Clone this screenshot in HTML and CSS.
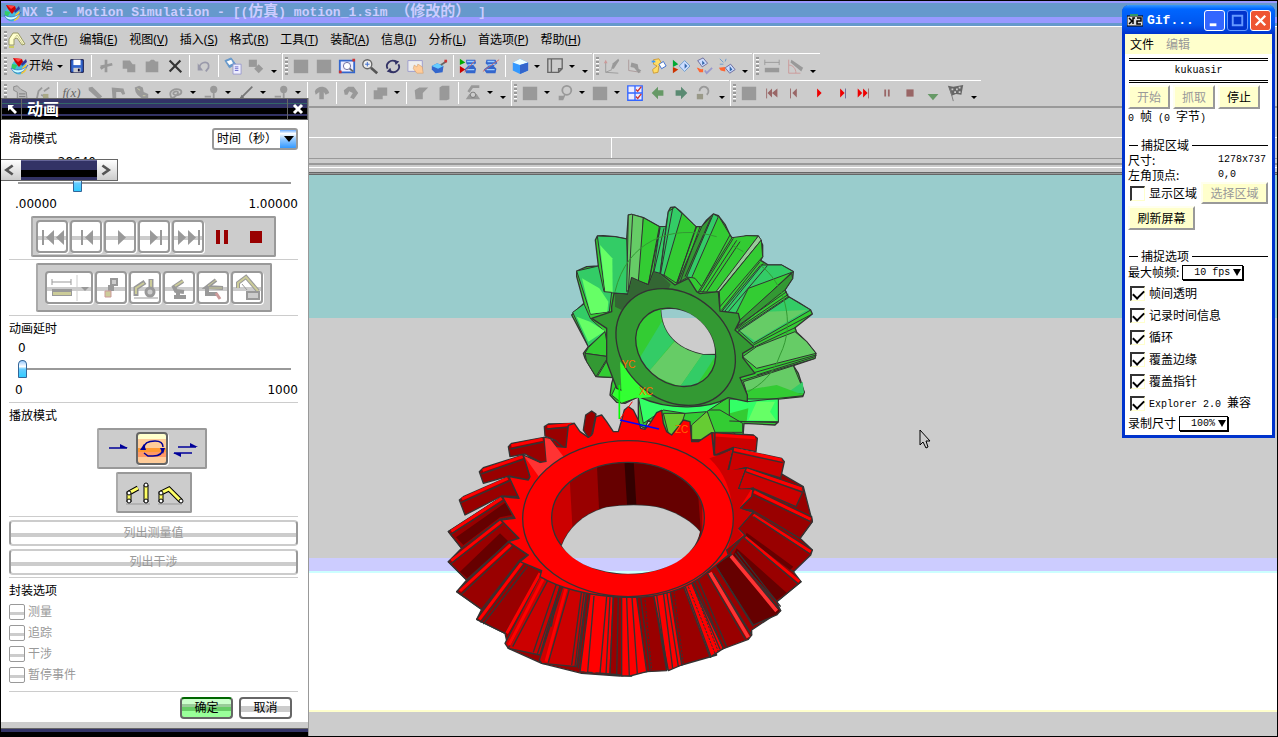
FILE: index.html
```html
<!DOCTYPE html>
<html lang="zh-CN">
<head>
<meta charset="utf-8">
<title>NX 5 - Motion Simulation</title>
<link rel="stylesheet" href="styles.css">
</head>
<body>
<svg class="defs" aria-hidden="true">
  <defs>
    <symbol id="nx" viewBox="0 0 20 20"><circle cx="10" cy="11" r="7.500" fill="#4bd"/><path d="M3 8a8 8 0 0 0 5 10c-3-4-2-6 1-9z" fill="#3c6"/><path d="M12 18c5-1 7-6 5-10l-4 4z" fill="#fc3"/><path d="M2 12c3 7 12 7 17-3-3 4-10 7-17 3z" fill="#cff" stroke="#36c" stroke-width=".7"/><path d="M4 2l9 1 1 3-4 5-4-5z" fill="#c00"/><path d="M5 2l8 1-4 3z" fill="#f44"/><path d="M17 3l1 3-5 4-1-2z" fill="#339"/></symbol>
    <symbol id="part" viewBox="0 0 20 20"><path d="M2 15V9l4-6h5l7 11-3 1-5-7-3 1v6z" fill="#ffc" stroke="#996"/><path d="M2 16h5v2H2z" fill="#cc6"/><path d="M7 9l3-4 6 9" fill="none" stroke="#cc9"/></symbol>
    <symbol id="save" viewBox="0 0 20 20"><path d="M3 3h14v14H3z" fill="#36c" stroke="#003"/><path d="M6 3h8v6H6z" fill="#fff"/><path d="M6 12h8v5H6z" fill="#ccc"/><path d="M11 13h2v3h-2z" fill="#003"/></symbol>
    <symbol id="cut" viewBox="0 0 20 20"><path d="M10 3v14M4 11l13-3M4 13l6-4" stroke="#999" stroke-width="3" fill="none"/></symbol>
    <symbol id="copy" viewBox="0 0 20 20"><path d="M3 4h8l3 4h3v9H8v-4H3z" fill="#999"/></symbol>
    <symbol id="paste" viewBox="0 0 20 20"><path d="M3 5h4l2-2h3l2 2h3v12H3z" fill="#999"/></symbol>
    <symbol id="del" viewBox="0 0 20 20"><path d="M4 4l13 13M16 4L4 16" stroke="#333" stroke-width="2.4"/></symbol>
    <symbol id="undo" viewBox="0 0 20 20"><path d="M5 11c1-6 12-8 10 1l-3 4" fill="none" stroke="#99a" stroke-width="2"/><path d="M3 7v8h6z" fill="#99a"/></symbol>
    <symbol id="cmd" viewBox="0 0 20 20"><path d="M1 4l7-3 5 7-7 4z" fill="#69c" stroke="#69c"/><path d="M3 5l5-2 2 4-4 2z" fill="#fff"/><path d="M10 8h9v11h-9z" fill="#eef" stroke="#99c"/><path d="M12 11h4M12 13h4M12 15h4" stroke="#66c"/></symbol>
    <symbol id="cmdg" viewBox="0 0 20 20"><path d="M2 3h9v8H2z" fill="#999"/><path d="M13 8l5 5-5 5-5-5z" fill="#999"/></symbol>
    <symbol id="sq" viewBox="0 0 20 20"><path d="M2 3h16v15H2z" fill="#999"/></symbol>
    <symbol id="fit" viewBox="0 0 20 20"><path d="M2 4h16v13H2z" fill="#eef" stroke="#36c" stroke-width="2"/><circle cx="10" cy="10" r="4" fill="#fff" stroke="#669"/><path d="M13 13l4 3" stroke="#666" stroke-width="2"/><path d="M16 2h3v3h-3zM1 15h3v3H1z" fill="#c33"/></symbol>
    <symbol id="mag" viewBox="0 0 20 20"><circle cx="7" cy="8" r="5" fill="#eee" stroke="#666" stroke-width="1.500"/><path d="M4.500 8h5M7 5.500v5" stroke="#36c"/><path d="M11 12l7 6" stroke="#555" stroke-width="3"/></symbol>
    <symbol id="rot" viewBox="0 0 20 20"><path d="M4 13a6.500 6 0 0 1 9-8M16 8a6.500 6 0 0 1-9 8" fill="none" stroke="#336" stroke-width="2"/><path d="M11 3l6 2-4 4zM9 18l-6-2 4-4z" fill="#336"/></symbol>
    <symbol id="pan" viewBox="0 0 20 20"><path d="M1 4h16v12H1z" fill="#eee" stroke="#99c"/><path d="M8 9l3 2 1-3 2 1 3 2 1 7h-7l-4-5z" fill="#fc9" stroke="#c96" stroke-width=".6"/></symbol>
    <symbol id="blue" viewBox="0 0 20 20"><path d="M2 10l6-3 7 3-1 7-8 1-4-4z" fill="#36c"/><path d="M2 10l6-3 7 3-6 3z" fill="#6cf"/><path d="M12 9l6-4" stroke="#666" stroke-width="2"/><path d="M16 3h3v3h-3z" fill="#c33"/></symbol>
    <symbol id="simr" viewBox="0 0 20 20"><path d="M8 3h10l1 4-3 2 3 4-1 5H8l-2-4 4-4-2-3z" fill="#36c"/><path d="M9 5h8M9 9l8-1M8 14h9" stroke="#9cf" stroke-width="1.500"/><path d="M6 17L18 4" stroke="#c66"/><path d="M1 2l6 4-6 3z" fill="#0a0"/><path d="M1 10l6 4-6 4z" fill="#c00"/></symbol>
    <symbol id="simb" viewBox="0 0 20 20"><path d="M5 3h10l2 4-4 3 3 3-1 5H5l-3-4 5-4-3-3z" fill="#36c"/><path d="M6 5h8M6 9l9-1M5 14h9" stroke="#9cf" stroke-width="1.500"/><path d="M1 16L19 3" stroke="#c66"/></symbol>
    <symbol id="cube" viewBox="0 0 20 20"><path d="M2 6l8-4 9 4v9l-9 4-8-4z" fill="#39f"/><path d="M2 6l8-4 9 4-9 3z" fill="#eff"/><path d="M10 9l9-3v9l-9 4z" fill="#36c"/></symbol>
    <symbol id="sheet" viewBox="0 0 20 20"><path d="M2 2h16v11l-4 4H2zM18 13h-4v4M6 2v15" fill="none" stroke="#666" stroke-width="1.500"/></symbol>
    <symbol id="axisg" viewBox="0 0 20 20"><path d="M3 6v11l7-3M3 17l14 1" stroke="#999" fill="none"/><path d="M1 7l2-4 2 4z" fill="#c99"/><path d="M9 13l2-6 6-5 1 2-6 9z" fill="#999"/></symbol>
    <symbol id="axisg2" viewBox="0 0 20 20"><path d="M3 3v12l13 2" stroke="#a99" fill="none"/><path d="M6 6l7 2 1 5 3 2-3 3-5-6-4-1z" fill="#999"/></symbol>
    <symbol id="yel" viewBox="0 0 20 20"><path d="M5 3l6-1 3 5-3 3-1 7-5 1-1-4 5-4-4-2z" fill="#fd6" stroke="#c93"/><path d="M11 8l5-3 3 5-5 3z" fill="#fff" stroke="#36c"/><path d="M3 5h4" stroke="#39f" stroke-width="2"/></symbol>
    <symbol id="play3" viewBox="0 0 20 20"><path d="M1 3l6 5-6 3z" fill="#0a3"/><path d="M1 11l6 3-6 4z" fill="#c30"/><path d="M8 10l6-6 6 6-6 6z" fill="#cdf" stroke="#69c"/><path d="M14 7l3 3-3 3z" fill="#36a"/></symbol>
    <symbol id="link1" viewBox="0 0 20 20"><path d="M3 4l6-3 5 6-6 4z" fill="#cdf" stroke="#669"/><path d="M8 4l3 3-3 2z" fill="#36a"/><path d="M2 12c3-1 3 3 7 1v4H5z" fill="#f63"/><path d="M11 15l2 3 6-6" fill="none" stroke="#99c" stroke-width="2"/></symbol>
    <symbol id="link2" viewBox="0 0 20 20"><path d="M8 12l6-4 5 6-6 4z" fill="#cdf" stroke="#669"/><path d="M13 10l3 4-3 2z" fill="#36a"/><path d="M1 12l7-1v5l-5-1z" fill="#f63"/><path d="M2 2l4 4M9 2l-1 3M2 8h4" stroke="#69c"/></symbol>
    <symbol id="meas" viewBox="0 0 20 20"><path d="M2 6h16M2 3v6M18 3v6" stroke="#999"/><path d="M2 12h16v5H2z" fill="#999"/></symbol>
    <symbol id="ang" viewBox="0 0 20 20"><path d="M3 3v15h13M3 9c5 0 8 4 8 9" stroke="#c99" fill="none"/><path d="M6 3l13 9-2 4L5 6z" fill="#999"/></symbol>
    <symbol id="envg" viewBox="0 0 20 20"><path d="M3 3l4-1 4 4 6 3 1 9H7V9L3 7z" fill="#bbb" stroke="#888"/><path d="M9 11h7M9 14h7" stroke="#777"/></symbol>
    <symbol id="linkg" viewBox="0 0 20 20"><path d="M3 17l2-9 4-4M8 12l9 5M11 8l6-4" stroke="#999" stroke-width="2" fill="none"/><path d="M10 11h6v5h-6z" fill="#aa8"/></symbol>
    <symbol id="barg" viewBox="0 0 20 20"><path d="M3 4l4-1 11 11-4 3L3 7z" fill="#999"/></symbol>
    <symbol id="elbg" viewBox="0 0 20 20"><path d="M3 4l13 1 2 6-3 1-2-3H8v8H4z" fill="#999"/></symbol>
    <symbol id="wedge" viewBox="0 0 20 20"><path d="M3 7l5-3h10l-6 6v7H4z" fill="#999"/></symbol>
    <symbol id="blobg" viewBox="0 0 20 20"><path d="M3 4l5-2 4 2 1 5 5 2v5l-6 1-6-5-2-3z" fill="#999"/><path d="M6 5l3 2M12 13h3" stroke="#cca"/></symbol>
    <symbol id="spring" viewBox="0 0 20 20"><path d="M4 13c-2-6 5-8 9-7s4 5 0 6-8-1-5-3 6 0 3 3-6 5-7 1" fill="none" stroke="#999" stroke-width="2"/></symbol>
    <symbol id="pin" viewBox="0 0 20 20"><circle cx="13" cy="6" r="4" fill="#999"/><path d="M13 9v7M3 14h7" stroke="#999" stroke-width="2"/></symbol>
    <symbol id="diag" viewBox="0 0 20 20"><path d="M4 16L17 3" stroke="#777" stroke-width="2"/><path d="M3 17l2-5 3 3z" fill="#777"/></symbol>
    <symbol id="hook" viewBox="0 0 20 20"><path d="M2 8c3-7 14-7 16 2l-4 2-2-3v8H7V9l-4 3z" fill="#999"/></symbol>
    <symbol id="clock" viewBox="0 0 20 20"><path d="M2 7l5-4 6 0 5 7-5 7-4-2 3-5-4-2-2 4H3z" fill="#999"/></symbol>
    <symbol id="box2" viewBox="0 0 20 20"><path d="M3 7h4V4h11v9h-5v4H3z" fill="#999"/></symbol>
    <symbol id="block" viewBox="0 0 20 20"><path d="M5 4l3-2h8v15l-3 1H5z" fill="#999"/></symbol>
    <symbol id="gear" viewBox="0 0 20 20"><path d="M2 17l4-6h8l4 6z" fill="#999"/><path d="M5 9l4-6h8" fill="none" stroke="#999" stroke-width="3"/><circle cx="10" cy="12" r="3" fill="#ccc" stroke="#777"/></symbol>
    <symbol id="mic" viewBox="0 0 20 20"><circle cx="12" cy="7" r="5" fill="none" stroke="#999" stroke-width="2"/><path d="M11 11l-3 7H3v-5h5" fill="#999"/></symbol>
    <symbol id="chk4" viewBox="0 0 20 20"><path d="M2 2h16v16H2zM10 2v16M2 10h16" fill="#eef" stroke="#36f" stroke-width="1.500"/><path d="M11 6l2 2 4-5M11 14l2 2 4-5" stroke="#c33" stroke-width="1.500" fill="none"/></symbol>
    <symbol id="al" viewBox="0 0 20 20"><path d="M3 10l7-7v4h6v6h-6v4z" fill="#696"/></symbol>
    <symbol id="ar" viewBox="0 0 20 20"><path d="M17 10l-7-7v4H4v6h6v4z" fill="#5a8a72"/></symbol>
    <symbol id="cyc" viewBox="0 0 20 20"><path d="M5 8a5 5 0 1 1 8 4" fill="none" stroke="#999" stroke-width="2"/><path d="M2 11h7v6H2z" fill="#998"/></symbol>
    <symbol id="first" viewBox="0 0 20 20"><path d="M4 5v11" stroke="#966"/><path d="M10 5v10l-5-5zM16 5v10l-6-5z" fill="#966"/></symbol>
    <symbol id="prev" viewBox="0 0 20 20"><path d="M5 5v11" stroke="#966"/><path d="M12 5v10l-5-5z" fill="#966"/></symbol>
    <symbol id="run" viewBox="0 0 20 20"><path d="M9 5l5 5-5 5z" fill="#e00"/></symbol>
    <symbol id="next" viewBox="0 0 20 20"><path d="M9 5l5 5-5 5z" fill="#e00"/><path d="M15 5v11" stroke="#669"/></symbol>
    <symbol id="last" viewBox="0 0 20 20"><path d="M3 5l5 5-5 5zM9 5l5 5-5 5z" fill="#e00"/><path d="M15 5v11" stroke="#966"/></symbol>
    <symbol id="pause" viewBox="0 0 20 20"><path d="M7 6h2v8H7zM11 6h2v8h-2z" fill="#966"/></symbol>
    <symbol id="stop" viewBox="0 0 20 20"><path d="M6 6h8v8H6z" fill="#966"/></symbol>
    <symbol id="down" viewBox="0 0 20 20"><path d="M4 11h12l-6 7z" fill="#696"/></symbol>
    <symbol id="flag" viewBox="0 0 20 20"><path d="M1 2l6 1 11-2-2 11-6-1-5 2z" fill="#666"/><path d="M5 5h2v2H5zM10 5h2v2h-2zM8 8h2v2H8zM13 8h2v2h-2zM13 3h2v2h-2z" fill="#ccc"/><path d="M3 4l4 15" stroke="#777"/></symbol>
  </defs>
</svg>

<header class="title">
  <svg class="i20"><use href="#nx"/></svg>
  <h1>NX 5 - Motion Simulation - [(<span>仿真</span>) motion_1.sim <span>（修改的）</span> ]</h1>
</header>
<nav class="menu">
  <span class="grip"></span>
  <svg class="i20"><use href="#part"/></svg>
  <ul>
    <li><a href="#">文件(<u>F</u>)</a></li><li><a href="#">编辑(<u>E</u>)</a></li><li><a href="#">视图(<u>V</u>)</a></li><li><a href="#">插入(<u>S</u>)</a></li><li><a href="#">格式(<u>R</u>)</a></li><li><a href="#">工具(<u>T</u>)</a></li><li><a href="#">装配(<u>A</u>)</a></li><li><a href="#">信息(<u>I</u>)</a></li><li><a href="#">分析(<u>L</u>)</a></li><li><a href="#">首选项(<u>P</u>)</a></li><li><a href="#">帮助(<u>H</u>)</a></li>
  </ul>
</nav>
<div class="bars">
  <div class="bar"><span class="grip"></span>
    <button class="start"><svg class="i20"><use href="#nx"/></svg>开始<i class="dd"></i></button>
    <button><svg><use href="#save"/></svg></button><s></s>
    <button><svg><use href="#cut"/></svg></button><button><svg><use href="#copy"/></svg></button><button><svg><use href="#paste"/></svg></button><button><svg><use href="#del"/></svg></button><s></s>
    <button><svg><use href="#undo"/></svg></button><s></s>
    <button><svg><use href="#cmd"/></svg></button><button><svg><use href="#cmdg"/></svg></button><button class="more"></button>
  </div>
  <div class="bar"><span class="grip"></span>
    <button><svg><use href="#sq"/></svg></button><button><svg><use href="#sq"/></svg></button><button><svg><use href="#fit"/></svg></button><button><svg><use href="#mag"/></svg></button><button><svg><use href="#rot"/></svg></button><button><svg><use href="#pan"/></svg></button><button><svg><use href="#blue"/></svg></button><s></s>
    <button><svg><use href="#simr"/></svg></button><button><svg><use href="#simb"/></svg></button><s></s>
    <button><svg><use href="#cube"/></svg></button><button class="drop"></button><button><svg><use href="#sheet"/></svg></button><button class="drop"></button><button class="more"></button>
  </div>
  <div class="bar"><span class="grip"></span>
    <button><svg><use href="#axisg"/></svg></button><button><svg><use href="#axisg2"/></svg></button><button><svg><use href="#yel"/></svg></button><button><svg><use href="#play3"/></svg></button><button><svg><use href="#link1"/></svg></button><button><svg><use href="#link2"/></svg></button><button class="more"></button>
  </div>
  <div class="bar"><span class="grip"></span>
    <button><svg><use href="#meas"/></svg></button><button><svg><use href="#ang"/></svg></button><button class="more"></button>
  </div>
</div>
<div class="bars second">
  <div class="bar"><span class="grip"></span>
    <button><svg><use href="#envg"/></svg></button><button><svg><use href="#linkg"/></svg></button><s></s>
    <button class="fx">f(x)</button><button><svg><use href="#barg"/></svg></button><button><svg><use href="#elbg"/></svg></button><button><svg><use href="#blobg"/></svg></button><button class="drop"></button>
    <button><svg><use href="#spring"/></svg></button><button class="drop"></button><button><svg><use href="#pin"/></svg></button><button class="drop"></button><button><svg><use href="#diag"/></svg></button><button class="drop"></button><button><svg><use href="#pin"/></svg></button><button class="drop"></button><s></s>
    <button><svg><use href="#hook"/></svg></button><s></s><button><svg><use href="#clock"/></svg></button><s></s>
    <button><svg><use href="#box2"/></svg></button><button class="drop"></button><s></s>
    <button><svg><use href="#wedge"/></svg></button><button><svg><use href="#block"/></svg></button><s></s>
    <button><svg><use href="#gear"/></svg></button><button class="drop"></button><button class="more"></button>
  </div>
  <div class="bar"><span class="grip"></span>
    <button><svg><use href="#sq"/></svg></button><button class="drop"></button><button><svg><use href="#mic"/></svg></button><button class="drop"></button><button><svg><use href="#sq"/></svg></button><button class="drop"></button>
    <button><svg><use href="#chk4"/></svg></button><button><svg><use href="#al"/></svg></button><button><svg><use href="#ar"/></svg></button><button><svg><use href="#cyc"/></svg></button><button class="more"></button>
  </div>
  <div class="bar"><span class="grip"></span>
    <button><svg><use href="#sq"/></svg></button><button><svg><use href="#first"/></svg></button><button><svg><use href="#prev"/></svg></button><button><svg><use href="#run"/></svg></button><button><svg><use href="#next"/></svg></button><button><svg><use href="#last"/></svg></button><button><svg><use href="#pause"/></svg></button><button><svg><use href="#stop"/></svg></button><button><svg><use href="#down"/></svg></button><button><svg><use href="#flag"/></svg></button><button class="more"></button>
  </div>
</div>
<div class="cue"></div>
<div class="prompt"><span></span><span></span></div>
<div class="rim"></div>

<main class="view">
  <svg class="gears" viewBox="0 0 1170 1470" role="img" aria-label="锥齿轮">
    <defs>
      <mask id="mg" maskUnits="userSpaceOnUse" x="0" y="0" width="810" height="750"><path d="M0 0h810v750H0z" fill="#fff"/><path d="M304 346C330 338 360 341 390 356C435 382 465 425 465 476L430 477C370 465 308 430 304 346z" fill="#000"/></mask>
      <mask id="mr" maskUnits="userSpaceOnUse" x="0" y="0" width="1170" height="860"><path d="M0 0h1170v860H0z" fill="#fff"/><path d="M365 437C385 385 430 340 500 322C550 314 620 312 670 326C720 343 755 365 780 395C765 470 680 521 564 521C470 518 400 490 365 437z" fill="#000"/></mask>
      <clipPath id="cg"><ellipse cx="347" cy="457" rx="130" ry="106" transform="rotate(42 347 457)"/></clipPath>
      <clipPath id="cr"><ellipse cx="564" cy="354" rx="229" ry="167"/></clipPath>
    </defs>
    <g transform="translate(360 0)">
      <g mask="url(#mg)" class="ink">
        <path fill="#3c3" d="M205 60L215 58 250 68 298 95H318L325 50 332 37 345 36 360 48 400 88 408 95H425L440 75 460 57 475 62 495 88 510 120 516 128 530 133 560 122 595 123 608 150V185L602 196 625 210H665L700 230 698 250 675 285 685 305 720 325 752 345 757 357 705 398 710 412 740 440 768 475 765 490 700 512 715 535 733 592 728 605 655 612V680L645 690 552 685 548 735H330L265 675 255 700 235 690V605L195 625 170 622 150 600 155 565 160 548 108 545 75 490 70 475 85 455 35 360 50 345 72 325 50 245V228L80 215 115 213 106 135 112 123 130 122 165 125 200 132z"/>
        <g stroke-width="3">
          <path fill="#3c6" d="M112 123L165 125 200 132 205 297 135 292z"/>
          <path fill="#6f6" stroke="none" d="M120 150L157 190 158 292 136 292z"/>
          <path fill="#3c6" d="M50 228L115 213 132 290 155 292 148 350 92 358z"/>
          <path fill="#6f6" stroke="none" d="M66 250L118 280 145 320 142 350 92 356z"/>
          <path fill="#3c6" d="M38 352L72 327 92 372 135 410 85 455z"/>
          <path fill="#6f6" stroke="none" d="M50 365L90 380 135 408 85 440z"/>
          <path fill="#3c3" d="M85 458L135 410 148 485 75 475z"/>
          <path fill="#393" d="M75 475L145 485 108 545 80 500z"/>
          <path fill="#3c3" d="M112 545L145 490 180 548z"/>
          <path fill="#3f3" d="M155 600L180 548 240 605 185 625z"/>
          <path fill="#6c6" d="M205 60L215 58 250 68 240 255 200 290z"/>
          <path fill="#3c3" d="M250 68L298 95 265 268 235 258z"/>
          <path fill="#3c6" d="M318 95L298 250 275 268 300 95z"/>
          <path fill="#3c6" d="M325 50L345 36 400 88 350 240 300 240z"/>
          <path fill="#3c3" d="M366 55L408 95 350 265 312 240z"/>
          <path fill="#393" d="M425 95L460 57 452 95 385 245 352 265z"/>
          <path fill="#3c3" d="M475 62L510 120 425 275 405 250 385 245z"/>
          <path fill="#3c6" d="M460 57L475 65 395 248 380 246z"/>
          <path fill="#3c3" d="M516 128L560 122 595 123 470 292 415 290z"/>
          <path fill="#9c9" d="M595 123L604 135 475 292 468 290z"/>
          <path fill="#3c3" d="M604 135L608 185 480 335 478 290z"/>
          <path fill="#3c6" d="M602 210H665L700 230 540 370 485 350z"/>
          <path fill="#3c3" d="M565 280L695 232 540 380 525 360z"/>
          <path fill="#393" d="M695 235L698 250 675 285 530 400 540 375z"/>
          <path fill="#3c6" d="M685 305L752 345 580 445 535 405z"/>
          <path fill="#6c6" stroke="none" d="M620 350L740 345 585 438 540 407z"/>
          <path fill="#6c6" d="M705 410L740 440 768 475 590 520 548 485 590 455z"/>
          <path fill="#3c3" d="M768 480L765 490 540 558 540 545z"/>
          <path fill="#6c6" d="M700 512L733 592 565 610 550 560z"/>
          <path fill="#3c6" stroke="none" d="M680 595L728 560 732 595z"/>
          <path fill="#3c3" stroke="none" d="M560 585L650 570 730 600 655 612 565 615z"/>
          <path fill="#3f6" d="M508 612L655 612V680H508z"/>
          <path fill="#3c3" stroke="none" d="M510 655L565 640 560 678H510z"/>
          <path fill="#6f6" stroke="none" d="M565 675L590 620H645L630 650 650 678z"/>
          <path fill="#6c3" d="M310 655L375 655 350 735H330zM395 690L440 650 548 735H395z"/>
          <path fill="#3c3" d="M440 645H480L548 685V712L465 712z"/>
          <path fill="#3f6" d="M235 605L380 630 500 610 440 650 375 655 310 645 250 685z"/>
          <path fill="none" d="M300 100L265 270M312 100L282 230M410 95L350 265M420 95L360 262M452 70L375 245M520 130L420 290M530 136L428 292M540 140L440 290M600 200L485 345M610 205L495 348M622 212L505 350M680 290L530 395M685 298L530 403M688 306L533 410M757 357L580 450M705 398L585 455M765 485L590 540M730 602L562 620M655 683L508 678M218 60L205 290M338 40L302 235"/>
          <path fill="none" stroke="#393" d="M165 290C200 140 330 85 470 125M515 150L550 170M600 210C670 260 710 380 660 480C640 540 600 570 565 590M170 420C230 560 330 620 500 605"/>
        </g>
        <path fill="#393" d="M215 248L265 270 280 230 300 235 345 270 385 250 410 290 420 296 475 290 480 348 535 355 540 375 525 405 582 455 548 475V488L585 535 540 548 562 600V620L505 608C450 640 330 650 235 605L170 580 140 500 140 400 95 370 155 350 155 335 162 295 203 298z"/>
        <path fill="#363" stroke="none" d="M217 250L265 272 282 232 300 237 332 268 325 284C260 285 205 310 185 345L165 335V297L203 300z"/>
        <path fill="#3f3" stroke="none" d="M180 500L235 560 275 605 240 610 185 600z"/>
        <ellipse fill="#393" cx="347" cy="456" rx="195" ry="157" transform="rotate(42 347 456)"/>
        <g clip-path="url(#cg)" stroke="none"><path fill="#3c3" d="M200 320h300v270H200z"/><path fill="#393" d="M220 400L300 330H200z"/><path fill="#3c6" d="M232 500L305 380 345 435 262 535z"/><path fill="#6c6" d="M262 535L350 432 430 475 360 575z"/><path fill="#3c6" d="M360 575L430 475 470 478 410 570z"/></g>
        <ellipse fill="none" cx="347" cy="457" rx="130" ry="106" transform="rotate(42 347 457)"/>
        <path fill="none" d="M304 346C308 430 370 465 430 477L465 478"/>
      </g>
    </g>
    <g transform="translate(0 615)" mask="url(#mr)" class="ink">
      <path fill="#900" d="M25 395L187 290 300 120H850L1090 260 1117 365 1080 415 1117 450 1060 515 1083 545 1010 605 1022 632 935 690 935 705 840 750 725 795 620 815 540 828 425 820 305 790 205 745 195 700 110 658 125 628 50 575 80 540 25 485 65 445z"/>
      <g stroke-width="4">
        <path fill="#900" d="M313 80L325 72 403 70 385 80 385 140 375 146 345 120 315 108z"/>
        <path fill="#900" d="M205 140L215 130 312 112 322 182 305 188 255 162 210 170z"/>
        <path fill="#900" d="M118 215L130 203 250 165 270 232 262 240 207 228 130 250z"/>
        <path fill="#900" d="M58 300L70 290 207 230 235 290 185 288 75 345z"/>
        <path fill="#900" d="M25 395L187 290 225 350 180 358 65 445z"/><path fill="#600" stroke="none" d="M48 412L200 305 215 345 180 352 70 435z"/>
        <path fill="#900" d="M25 485L183 358 235 415 205 425 80 540z"/><path fill="#600" stroke="none" d="M60 515L180 400 205 424 82 534z"/>
        <path fill="#900" d="M50 575L205 425 262 465 240 480 125 628z"/>
        <path fill="#900" d="M110 658L240 482 305 515 300 530 195 700z"/>
        <path fill="#c00" d="M195 730L300 528 362 550 300 765 205 745z"/>
        <path fill="#c00" d="M298 780L368 560 440 572 410 800 305 790z"/>
        <path fill="red" d="M420 815L450 580 520 590 510 822z"/>
        <path fill="#900" d="M510 822L520 590H570L575 828z"/>
        <path fill="none" stroke="red" stroke-width="9" d="M322 80L395 73M214 137L308 118M128 211L248 170M66 297L203 235M34 394L185 295M34 482L183 365M60 573L212 434M118 658L246 488"/>
        <path fill="none" d="M320 87L385 82M212 147L310 126M124 222L250 178M63 308L210 242M32 403L190 302M32 492L188 372M62 585L218 440M122 668L252 494M130 672L262 500M205 745L310 534"/>
        <path fill="none" stroke="red" stroke-width="9" d="M207 735L312 532M318 785L378 566M438 815L466 590M462 818L480 590M200 700L300 520"/>
        <path fill="none" d="M218 740L325 538M280 757L350 550M292 762L362 556M325 788L388 568M334 680L348 600M395 795L425 572M405 800L433 574M415 805L441 576M443 816L462 588M480 820L500 590M498 822L510 592M530 825L535 592"/>
      </g>
      <g transform="translate(540 0)" stroke-width="4">
        <path fill="#c00" d="M275 98L400 105 412 115 408 155 340 142 285 165z"/>
        <path fill="#c00" d="M340 145L485 175 493 185 482 234 378 203 325 215z"/>
        <path fill="#c00" d="M378 203L548 262 550 272 528 320 400 265 355 268z"/>
        <path fill="#900" d="M400 268L575 350 577 365 540 415 395 330 362 328z"/>
        <path fill="#900" d="M398 338L577 450 572 465 520 515 372 405 352 390z"/><path fill="#600" stroke="none" d="M380 398L520 500 510 510 375 410z"/>
        <path fill="#900" d="M372 405L543 545 470 605 330 460z"/><path fill="#600" stroke="none" d="M350 445L500 578 470 600 340 465z"/>
        <path fill="#600" d="M330 465L482 632 470 645 400 675 285 495z"/>
        <path fill="#900" d="M265 515L395 705 385 718 300 750 212 540z"/>
        <path fill="#900" d="M190 558L290 765 185 795 150 572z"/>
        <path fill="#900" d="M100 580L140 812 80 815 50 592z"/>
        <path fill="red" d="M150 572L185 795 145 812 100 580zM50 592L80 815 30 828 5 828V592zM212 540L310 745 270 772 190 558z"/>
        <path fill="none" stroke="#f33" stroke-width="11" d="M270 518L385 712M333 468L470 633"/>
        <path fill="none" stroke="red" stroke-width="9" d="M285 105L405 113M342 148L485 180M380 210L545 267M402 275L572 358M400 345L572 455M376 412L538 545"/>
        <path fill="none" d="M285 98L283 165M336 155L488 188M376 215L546 276M400 285L572 365M400 350L570 462M370 412L534 552M345 460L475 625M352 455L482 620M280 520L392 700M292 505L400 680M262 522L376 718M215 548L300 748M224 542L310 745M234 538L320 740M196 560L272 768M140 575L175 800M130 578L158 806M62 592L90 812M36 592L52 822M20 594L28 828M110 585L142 810"/>
        <path fill="none" stroke-width="3" stroke-dasharray="7 4" d="M205 560L285 760M218 555L295 755M162 575L190 790M75 600L95 810"/>
      </g>
      <path fill="red" d="M313 112L330 115 350 140 378 142 385 76 403 70 420 95 445 112 458 100 468 50 485 45 500 65 520 95H535L545 60 553 30 565 20 580 30 595 60 602 85 615 88 630 70 650 38 665 31 670 70 680 95 695 105 715 80 730 60 750 65 755 125H775L815 98 822 165H840L880 145 862 210 875 215 918 203 895 265 910 272 940 264 935 290 900 325 915 330 940 336 895 385 915 405 860 450 865 465 800 518 C740 570 650 595 564 592C440 590 350 560 300 530L305 512 240 485 265 465 205 425 237 415 183 360 225 355 187 290 237 295 207 230 265 240 270 230 250 165 300 187 320 185z"/>
      <path fill="#900" d="M430 90L437 45 455 33 468 42 455 105 445 112z"/>
      <path fill="#c00" stroke="none" d="M808 175L838 165 876 150 862 210 914 207 893 268 934 268 898 325 934 338 893 388 908 405 862 448C890 380 890 250 808 175z"/>
      <path fill="#f33" stroke="none" d="M314 114L330 117 372 172 300 235 252 168 300 190 320 186z"/>
      <ellipse fill="red" cx="564" cy="356" rx="316" ry="234" stroke-width="4"/>
      <g clip-path="url(#cr)" stroke="none"><path fill="#c00" d="M330 180h460v340H330z"/><path fill="#900" d="M386 180h400v340H405z"/><path fill="#600" d="M470 180h297l18 250H482z"/><path fill="#300" d="M553 180h28l9 150h-28z"/></g>
      <ellipse fill="none" cx="564" cy="354" rx="229" ry="167"/>
      <path fill="none" d="M365 437C385 385 430 340 500 322C550 314 620 312 670 326C720 343 755 365 780 395"/>
    </g>
    <g fill="none" stroke-width="5"><path stroke="#0f0" d="M538 570V672"/><path stroke="red" stroke-width="3" d="M540 672L577 620"/><path stroke="#00f" d="M540 675L657 702"/></g>
    <g class="axis"><text x="545" y="520">YC</text><text x="597" y="600">XC</text><text x="705" y="714">ZC</text></g>
  </svg>
  <svg class="cursor" viewBox="0 0 12 20"><path d="M1 1v15l3-3 3 6 2-1-2-6h4z" fill="#ccc" stroke="#000"/></svg>
</main>
<footer class="status"></footer>

<section class="anim" aria-label="动画">
  <header><button class="pick" aria-label="选择"><svg viewBox="0 0 12 12"><path d="M2 2h6L6 4l5 5-2 2-5-5-2 2z" fill="#fff"/></svg></button><h2>动画</h2><button class="close" aria-label="关闭"><svg viewBox="0 0 12 12"><path d="M2 2l8 8M10 2l-8 8" stroke="#fff" stroke-width="3"/></svg></button></header>
  <div class="body">
    <div class="mode"><label for="mode">滑动模式</label><span class="combo"><select id="mode"><option>时间（秒）</option></select></span></div>
    <div class="num val">.28640</div>
    <input type="range" class="time" min="0" max="1" step="0.01" value="0.21" aria-label="时间">
    <div class="num ends"><span>.00000</span><span>1.00000</span></div>
    <div class="tray t1">
      <button><svg viewBox="0 0 30 30"><path d="M5 8v15" stroke="#999" stroke-width="2"/><path d="M16 8v15l-8-7.500zM26 8v15l-8-7.500z" fill="#999"/></svg></button>
      <button><svg viewBox="0 0 30 30"><path d="M10 8v15" stroke="#999" stroke-width="2"/><path d="M21 8v15l-8-7.500z" fill="#999"/></svg></button>
      <button><svg viewBox="0 0 30 30"><path d="M12 8v15l8-7.500z" fill="#999"/></svg></button>
      <button><svg viewBox="0 0 30 30"><path d="M10 8v15l8-7.500z" fill="#999"/><path d="M21 8v15" stroke="#999" stroke-width="2"/></svg></button>
      <button><svg viewBox="0 0 30 30"><path d="M4 8v15l8-7.500zM14 8v15l8-7.500z" fill="#999"/><path d="M25 8v15" stroke="#999" stroke-width="2"/></svg></button>
      <button class="flat"><svg viewBox="0 0 30 30"><path d="M9 8h4v14H9zM17 8h4v14h-4z" fill="#900"/></svg></button>
      <button class="flat"><svg viewBox="0 0 30 30"><path d="M9 9h12v12H9z" fill="#900"/></svg></button>
    </div>
    <hr>
    <div class="tray t2">
      <button class="wide"><svg viewBox="0 0 46 30"><path d="M5 9h19M5 6v6M24 6v6" stroke="#999"/><path d="M5 16h20v7H5z" fill="#999"/><path d="M6 19h18v3H6z" fill="#cc9"/><path d="M30 2v26" stroke="#ccc"/><path d="M34 14h8l-4 4z" fill="#999"/></svg></button>
      <button><svg viewBox="0 0 30 30"><path d="M14 6h6v6h-6z" fill="#ccc" stroke="#999" stroke-width="2"/><path d="M11 12h6v6h-6z" fill="#999"/><path d="M8 18h6v6H8z" fill="#cc9" stroke="#c99"/></svg></button>
      <button><svg viewBox="0 0 30 30"><path d="M3 25h24" stroke="#999"/><path d="M5 23v-8l9-6M20 6v12" fill="none" stroke="#999" stroke-width="5"/><path d="M5 21v-6l8-5M20 7v8" fill="none" stroke="#cc9" stroke-width="2"/><circle cx="19" cy="19" r="4" fill="#ccc" stroke="#999" stroke-width="3"/></svg></button>
      <button><svg viewBox="0 0 30 30"><path d="M18 8l-9 6 2 4 8 1M9 24h12M13 20v3" fill="none" stroke="#999" stroke-width="4"/><path d="M18 8l-8 5" stroke="#cc9" stroke-width="2"/></svg></button>
      <button><svg viewBox="0 0 30 30"><path d="M17 7L8 14l16 1M8 15v6h10" fill="none" stroke="#999" stroke-width="4"/><path d="M17 7l-8 6M10 15h13" stroke="#cc9"/><path d="M17 20l4 6" stroke="#c99" stroke-width="3"/></svg></button>
      <button><svg viewBox="0 0 30 30"><path d="M5 15V10l8-6 12 14" fill="none" stroke="#999" stroke-width="4"/><path d="M5 15V10l8-6 12 14" fill="none" stroke="#cc9" stroke-width="2"/><path d="M14 19h12v7H14z" fill="#ccc" stroke="#999" stroke-width="2"/><path d="M9 11l5 6" stroke="#999"/></svg></button>
    </div>
    <hr>
    <label class="cap" for="delay">动画延时</label>
    <div class="num cur">0</div>
    <input type="range" id="delay" class="full" min="0" max="1000" value="0">
    <div class="num ends"><span>0</span><span>1000</span></div>
    <hr>
    <div class="cap">播放模式</div>
    <div class="tray t3">
      <button class="flat"><svg viewBox="0 0 30 30"><path d="M6 14h18" stroke="#009" stroke-width="1.500"/><path d="M17 10l8 4h-8z" fill="#009"/></svg></button>
      <button class="on"><svg viewBox="0 0 30 30"><path d="M6 14c0-5 4-7 11-7 6 0 8 2 8 6M25 14c0 6-4 8-10 8H10l-4-3" fill="none" stroke="#009" stroke-width="1.500"/><path d="M2 16l4-6 2 6zM22 14h5l-2 6z" fill="#009"/></svg></button>
      <button class="flat"><svg viewBox="0 0 30 30"><path d="M7 13h18M3 19h18" stroke="#009" stroke-width="1.500"/><path d="M19 9l8 4h-8zM10 23l-8-4h8z" fill="#009"/></svg></button>
    </div>
    <div class="tray t4">
      <button class="flat"><svg viewBox="0 0 30 30"><path d="M4 26h24" stroke="#999"/><path d="M7 24V15l9-5M24 24V7" fill="none" stroke="#000" stroke-width="5"/><path d="M7 23V15l9-5M24 23V7" fill="none" stroke="#ff6" stroke-width="3"/><g fill="#fff" stroke="#000"><circle cx="7" cy="23" r="2"/><circle cx="7" cy="15" r="2"/><circle cx="24" cy="23" r="2"/><circle cx="24" cy="7" r="2"/></g></svg></button>
      <button class="flat"><svg viewBox="0 0 30 30"><path d="M2 26h24" stroke="#999"/><path d="M5 24V15l8-4 12 12" fill="none" stroke="#000" stroke-width="5"/><path d="M5 23V15l8-4 12 12" fill="none" stroke="#ff6" stroke-width="3"/><g fill="#fff" stroke="#000"><circle cx="5" cy="23" r="2"/><circle cx="5" cy="15" r="2"/><circle cx="25" cy="23" r="2"/></g></svg></button>
    </div>
    <hr>
    <button class="list" disabled>列出测量值</button>
    <button class="list" disabled>列出干涉</button>
    <hr>
    <div class="cap">封装选项</div>
    <label class="opt"><input type="checkbox" disabled>测量</label>
    <label class="opt"><input type="checkbox" disabled>追踪</label>
    <label class="opt"><input type="checkbox" disabled>干涉</label>
    <label class="opt"><input type="checkbox" disabled>暂停事件</label>
    <hr class="lasthr">
    <div class="acts"><button class="ok">确定</button><button>取消</button></div>
  </div>
  <footer></footer>
  <div class="mini"><button aria-label="左"><svg viewBox="0 0 20 20"><path d="M13 5l-7 5 7 5" fill="none" stroke="#555" stroke-width="3"/></svg></button><span></span><button aria-label="右"><svg viewBox="0 0 20 20"><path d="M6 5l7 5-7 5" fill="none" stroke="#555" stroke-width="3"/></svg></button></div>
</section>

<section class="gif" aria-label="Gif">
  <header><svg viewBox="0 0 16 16"><path d="M0 3h16v10H0z" fill="#ddd" stroke="#000"/><path d="M3 1h8v2H3z" fill="#396"/><path d="M2 5l3 3-3 3M6 11V5h2M10 5h4v3h-4v3h4" stroke="#000" stroke-width="1.500" fill="none"/></svg><h2>Gif...</h2>
    <button aria-label="最小化"><svg viewBox="0 0 20 20"><path d="M5 13h7v3H5z" fill="#fff"/></svg></button><button class="dim" aria-label="最大化"><svg viewBox="0 0 20 20"><path d="M5 5h10v10H5z" fill="none" stroke="#69f" stroke-width="2"/></svg></button><button class="x" aria-label="关闭"><svg viewBox="0 0 20 20"><path d="M5 5l10 10M15 5L5 15" stroke="#fff" stroke-width="2.500"/></svg></button></header>
  <nav><a href="#">文件</a><a href="#" class="off">编辑</a></nav>
  <div class="gb">
    <div class="name">kukuasir</div>
    <div class="row"><button disabled>开始</button><button disabled>抓取</button><button>停止</button></div>
    <div class="info"><b>0 </b>帧<b> (0 </b>字节<b>)</b></div>
    <h3>捕捉区域</h3>
    <dl><dt>尺寸:</dt><dd>1278x737</dd><dt>左角顶点:</dt><dd>0,0</dd></dl>
    <div class="row area"><label class="ck"><input type="checkbox">显示区域</label><button disabled>选择区域</button></div>
    <div class="row"><button class="refresh">刷新屏幕</button></div>
    <h3 class="second">捕捉选项</h3>
    <div class="sel"><label for="fps">最大帧频:</label><span class="pick2"><select id="fps"><option>10 fps</option></select></span></div>
    <label class="ck"><input type="checkbox" checked>帧间透明</label>
    <label class="ck"><input type="checkbox" checked>记录时间信息</label>
    <label class="ck"><input type="checkbox" checked>循环</label>
    <label class="ck"><input type="checkbox" checked>覆盖边缘</label>
    <label class="ck"><input type="checkbox" checked>覆盖指针</label>
    <label class="ck"><input type="checkbox" checked><span><b>Explorer 2.0 </b>兼容</span></label>
    <div class="sel size"><label for="size">录制尺寸</label><span class="pick2"><select id="size"><option>100%</option></select></span></div>
  </div>
</section>
</body>
</html>
```

FILE: styles.css
```css
* { box-sizing: border-box; }
html { height: 100%; }
body {
  margin: 0; height: 100%; display: flex; flex-direction: column; position: relative; overflow: hidden;
  border: 1px solid #000; background: #ccc; color: #000;
  font: 12px/16px "Noto Sans", "Noto Sans CJK SC", sans-serif;
}
button, select, input { font: inherit; color: inherit; margin: 0; }
button { padding: 0; border: 0; background: none; }
a { color: inherit; text-decoration: none; }
h1, h2, h3, ul, dl, dd { margin: 0; padding: 0; }
.defs { position: absolute; width: 0; height: 0; }
.i20 { width: 20px; height: 20px; flex: none; }

.title {
  height: 26px; flex: none; display: flex; align-items: center; padding: 0 0 2px 1px;
  border-bottom: 1px solid #fff;
  background: linear-gradient(#99f 0 2px, #69c 2px 16px, #99f 16px 22px, #69c 22px);
}
.title h1 { color: #ccf; white-space: pre; font: bold 13px/20px "Liberation Mono", "Noto Sans CJK SC", monospace; }
.title h1 span { font-size: 15px; }

.menu { height: 26px; flex: none; display: flex; align-items: center; padding-left: 3px; }
.menu ul { display: flex; gap: 12px; list-style: none; padding-left: 3px; }
.grip { width: 3px; height: 18px; flex: none; background: repeating-linear-gradient(#999 0 2px, #fff 2px 3px, #ccc 3px 4px); }

.bars { height: 27px; flex: none; display: flex; gap: 1px; }
.bars.second { height: 28px; border-bottom: 2px solid #999; }
.bar { display: flex; align-items: center; border-top: 1px solid #fff; position: relative; padding: 0 0 2px 3px; }
.bar + .bar { border-left: 1px solid #fff; padding-left: 2px; }
.bar .grip { margin-right: 1px; }
.bar button { width: 23px; height: 24px; display: flex; align-items: center; justify-content: center; }
.bar button svg { width: 18px; height: 18px; }
.bar s { width: 6px; height: 22px; flex: none; background: linear-gradient(#fff, #fff) 3px 0 / 1px 100% no-repeat; }
.bar .start { width: auto; padding: 0 2px 0 1px; }
.bar .start .i20 { width: 20px; height: 20px; }
.dd, .drop::after, .more::after { content: ""; border: 3px solid transparent; border-top-color: #000; border-bottom: 0; }
.dd { margin-left: 4px; }
.bar .drop { width: 12px; }
.bar .more { width: 14px; padding-top: 10px; }
.bar .fx { font: italic 13px/16px "Liberation Serif", serif; color: #666; }

.cue { height: 29px; flex: none; }
.prompt { height: 21px; flex: none; display: grid; grid-template-columns: 610px 1fr; border-top: 1px solid #fff; }
.prompt span + span { border-left: 1px solid #fff; }
.rim { height: 17px; flex: none; background: linear-gradient(#999 0 1px, #ccc 1px 5px, #999 5px 7px, #ccc 7px 9px, #fff 9px 10px, #ccc 10px 14px, #666 14px 15px, #999 15px 16px, #666 16px); }

.view {
  flex: 1; min-height: 0; position: relative; overflow: hidden;
  background: linear-gradient(#9cc 0 26.7%, #ccc 26.7% 71.6%, #ccf 71.6% 74%, #cff 74% 74.4%, #fff 74.4%);
}
.gears { position: absolute; left: 439px; top: 20px; width: 390px; height: 490px; }
.ink { stroke: #333; stroke-width: 4; stroke-linejoin: round; }
.axis text { font: 30px "Liberation Sans", sans-serif; fill: #f60; }
.cursor { position: absolute; left: 918px; top: 254px; width: 12px; height: 20px; }
.status { height: 26px; flex: none; border-top: 2px solid #ffc; background: #ccc; }

/* animation dialog */
.anim { position: absolute; left: 0; top: 97px; bottom: 0; width: 308px; display: flex; flex-direction: column; background: #fff; border-right: 1px solid #999; }
.anim > header { height: 22px; flex: none; display: flex; border: 1px solid #666; background: linear-gradient(#336 0 4px, #366 4px 5px, #336 5px 9px, #000 9px 15px, #336 15px 17px, #000 17px); }
.anim > header button { width: 20px; display: grid; place-items: center; }
.anim > header svg { width: 12px; height: 12px; }
.anim .pick { border-right: 1px solid #666; }
.anim .close { border-left: 1px solid #666; }
.anim h2 { flex: 1; padding-left: 5px; color: #fff; font: bold 16px/18px "Noto Sans CJK SC", sans-serif; }
.body { flex: 1; padding: 8px 10px 0 8px; display: flex; flex-direction: column; }
.mode { display: flex; justify-content: space-between; align-items: center; height: 22px; }
.combo { position: relative; width: 86px; height: 22px; }
.combo select { appearance: none; width: 100%; height: 100%; padding: 0 20px 0 3px; border: 2px solid #999; border-radius: 3px; background: linear-gradient(#6af, #fff 20%, #9cf 50%, #39f) right / 16px 100% no-repeat #fff; overflow: hidden; text-overflow: clip; }
.combo::after { content: ""; position: absolute; right: 4px; top: 8px; border: 5px solid transparent; border-top: 6px solid #000; border-bottom: 0; }
.num { font: 12px/16px "DejaVu Sans", sans-serif; }
.val { height: 16px; padding-left: 45px; margin-top: 4px; }
.ends { display: flex; justify-content: space-between; padding: 0 0 0 6px; }
.body input[type=range] { appearance: none; width: 273px; height: 20px; margin-left: 9px; background: linear-gradient(#999, #999) 0 9px / 100% 2px no-repeat; }
.body input[type=range]::-webkit-slider-thumb { appearance: none; width: 9px; height: 18px; border: 1px solid #369; border-radius: 5px 5px 1px 1px; background: linear-gradient(#9cf, #fff 35%, #6cf 50%, #3cf); }
.body .time { margin-top: 3px; }
.body .time + .ends { margin-top: 3px; }
hr { width: 100%; margin: 0; border: 0; border-top: 1px solid #ccc; flex: none; }
.tray { align-self: center; display: flex; justify-content: center; align-items: center; gap: 2px; background: #ccc; border: 2px solid #999; border-left-color: #aaa; border-radius: 2px; }
.tray button { width: 32px; height: 33px; display: grid; place-items: center; border: 2px solid #999; border-radius: 4px; box-shadow: 1px 1px #fff; background: linear-gradient(#fff 0 50%, #ccc 50% 62%, #fff 62%); }
.tray svg { width: 30px; height: 30px; }
.tray .flat { border: 0; background: none; box-shadow: none; }
.tray .wide { width: 48px; }
.tray .wide svg { width: 46px; }
.tray .on { border-color: #666; background: linear-gradient(#ffc 0 18%, #fc9 18% 50%, #f93 50% 62%, #f96 62% 80%, #fc9 80%); }
.t1 { width: 245px; height: 41px; margin: 4px 0 2px; }
.t2 { width: 236px; height: 49px; margin: 3px 0; }
.t3 { width: 110px; height: 41px; margin: 4px 4px 3px 0; }
.t4 { width: 76px; height: 41px; margin-bottom: 3px; }
.cap { margin-top: 5px; }
.cur { padding-left: 9px; margin-top: 3px; }
.full + .ends { margin: 3px 0 4px; }
.body .full { margin-top: 3px; }
.list { height: 26px; margin-top: 3px; border: 2px solid #999; border-color: #ccc #999 #ccc #999; border-radius: 4px; color: #999; background: linear-gradient(#fff 0 48%, #ccc 48% 66%, #fff 66%); }
.list + hr { margin-top: 2px; }
.opt { display: flex; align-items: center; gap: 3px; height: 21px; color: #999; }
.cap + .opt { margin-top: 2px; }
.opt input { appearance: none; width: 16px; height: 16px; border: 1px solid #999; border-radius: 2px; background: linear-gradient(#fff 0 50%, #ccc 50% 68%, #fff 68%); }
.lasthr { margin-top: 6px; }
.acts { display: flex; justify-content: flex-end; gap: 6px; padding: 5px 6px 0 0; }
.acts button { width: 53px; height: 22px; border: 2px solid #666; border-radius: 4px; background: linear-gradient(#fff 0 40%, #ccc 40% 70%, #fff 70%); }
.acts .ok { border-color: #060 #666 #666; background: linear-gradient(#cfc 0 25%, #9c9 25% 45%, #6c6 45% 65%, #9f9 65%); }
.anim > footer { height: 14px; flex: none; border-top: 6px solid #ccc; background: linear-gradient(#666 0 1px, #336 1px 4px, #000 4px); }
.mini { position: absolute; left: 0; top: 61px; width: 117px; height: 22px; display: flex; border: 1px solid #666; border-left: 0; }
.mini span { flex: 1; background: linear-gradient(#669 0 1px, #336 1px 5px, #336 5px 10px, #000 10px 17px, #336 17px); }
.mini button { width: 20px; background: linear-gradient(#fff, #ccc); }
.mini svg { width: 18px; height: 18px; display: block; }

/* capture window */
.gif { position: absolute; right: 2px; top: 4px; width: 153px; padding-bottom: 5px; border: solid #03c; border-width: 0 3px; border-radius: 7px 7px 0 0; background: linear-gradient(#03c, #03c) bottom / 100% 3px no-repeat #fff; font-family: "Noto Sans CJK SC", sans-serif; }
.gif b, .gif select, .gif dd, .name { font: 10px/14px "Liberation Mono", monospace; }
.gif > header { height: 29px; margin: 0 -3px; padding: 2px 4px 0 5px; display: flex; align-items: center; gap: 2px; border-radius: 7px 7px 0 0; background: linear-gradient(#39f 0, #06f 4px, #05e 20px, #03c); }
.gif > header > svg { width: 16px; height: 16px; }
.gif h2 { flex: 1; color: #fff; padding-left: 2px; font: bold 13px/20px "Liberation Mono", monospace; }
.gif > header button { width: 21px; height: 21px; border: 1px solid #fff; border-radius: 3px; background: #36f; }
.gif > header .dim { border-color: #69f; background: #03c; }
.gif > header .x { background: #e53; }
.gif > header button svg { display: block; width: 19px; height: 19px; }
.gif nav { height: 20px; display: flex; gap: 12px; padding: 2px 5px; background: #ffc; }
.off, .gif button:disabled { color: #999; }
.gb { padding: 4px 4px 0 3px; display: flex; flex-direction: column; }
.name { height: 25px; border: 3px double #000; border-width: 3px 0; line-height: 19px; text-align: center; margin-left: 1px; }
.row { display: flex; gap: 3px; margin-top: 2px; }
.row button { width: 42px; height: 24px; border: 2px solid; border-color: #ffe #999 #999 #ffe; background: #ffc; }
.info { height: 15px; line-height: 14px; white-space: pre; }
.gif h3 { display: flex; align-items: center; gap: 3px; margin-top: 14px; padding-left: 1px; font: inherit; line-height: 14px; }
.gif h3::before, .gif h3::after { content: ""; height: 1px; background: #000; width: 9px; }
.gif h3::after { flex: 1; width: auto; }
dl { display: grid; grid-template-columns: 90px 1fr; grid-auto-rows: 15px; align-items: center; }
dl dt { line-height: 12px; }
.gif .area { margin-top: 0; align-items: center; justify-content: space-between; }
.gif .area button { width: 67px; height: 22px; }
.gif .refresh { width: 67px; }
.ck { display: flex; align-items: center; gap: 4px; height: 22px; padding-left: 2px; white-space: pre; }
.ck input { appearance: none; position: relative; width: 15px; height: 15px; flex: none; border: 2px solid #333; border-right: 1px solid #ffc; border-bottom: 1px solid #ffc; background: #fff; }
.ck input:checked::after { content: ""; position: absolute; left: 3px; top: 0; width: 5px; height: 9px; border: solid #000; border-width: 0 2px 2px 0; transform: rotate(45deg); }
.gif .second { margin-top: 19px; }
.sel { display: flex; align-items: center; gap: 3px; height: 18px; margin-bottom: 1px; }
.pick2 { position: relative; width: 61px; height: 15px; }
.pick2 select { appearance: none; display: block; width: 100%; height: 100%; padding: 0 0 0 11px; line-height: 13px; border: 1px solid #000; border-radius: 0; box-shadow: 1px 1px #000; background: #fff; }
.pick2::after { content: ""; position: absolute; right: 2px; top: 4px; border: 4px solid transparent; border-top: 7px solid #000; border-bottom: 0; }
.size .pick2 { width: 49px; }
```
